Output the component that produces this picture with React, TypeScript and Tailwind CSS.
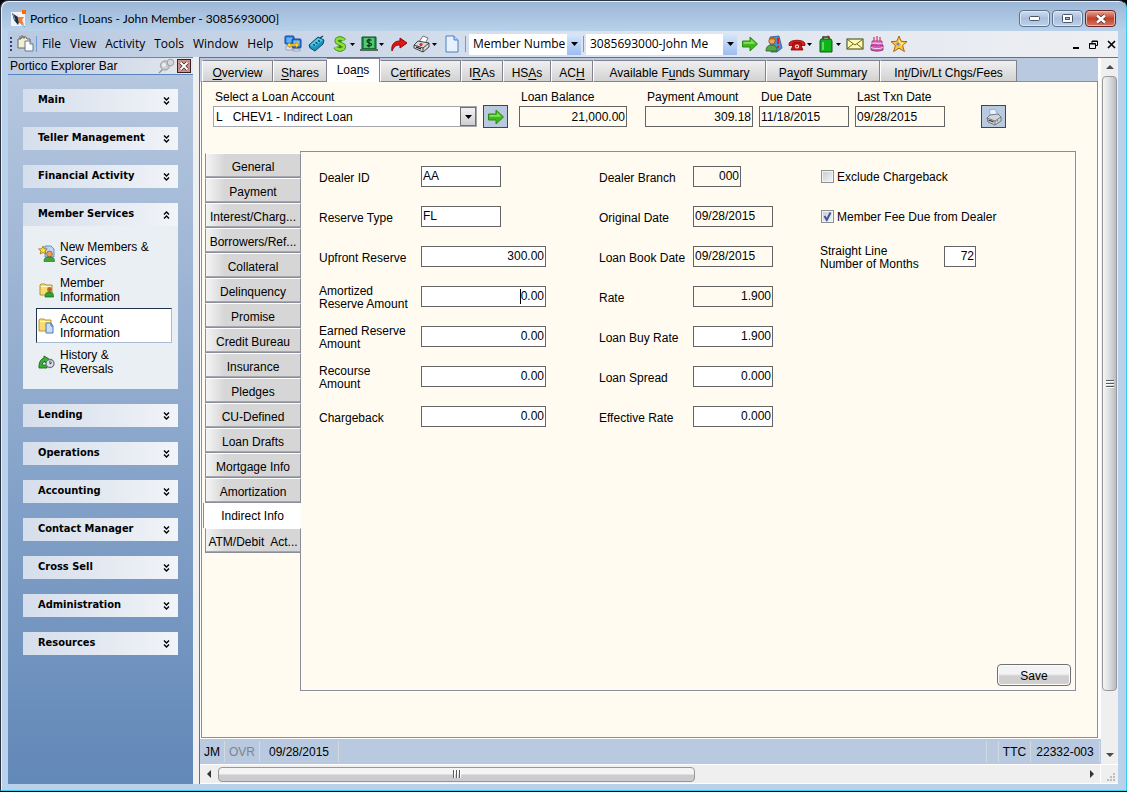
import React from "react";

type Kids = { children: React.ReactNode };

const Svg = ({ children }: Kids) => (
  <svg width="18" height="18" viewBox="0 0 18 18" aria-hidden="true" className="shrink-0">
    {children}
  </svg>
);

const Caret = () => (
  <svg width="5" height="3" viewBox="0 0 5 3" aria-hidden="true" className="shrink-0">
    <path d="M0 0h5L2.5 3z" fill="#000" />
  </svg>
);

const LogoIcon = () => (
  <Svg>
    <rect x="1" y="2" width="14" height="14" fill="#f4f4f4" />
    <path d="M2 3l6 4 1 5-1 3-4-5z" fill="#14304a" />
    <path d="M7 3l1 4 6 0-2 3 2 5-5-2-1-4z" fill="#f47b3a" />
    <path d="M3 4l2 6M11 14l4 3" stroke="#7aa0c4" />
    <rect x="12" y="0" width="4" height="4" fill="#ff6a00" />
  </Svg>
);

const DocsIcon = () => (
  <Svg>
    <path d="M1 4h3l1-2h4l1 2h3v9H1z" fill="#f2efd8" stroke="#6c6a55" />
    <path d="M3 1v3M5 0v3M7 1v3" stroke="#6c6a55" />
    <path d="M8 6h5l3 3v7H8z" fill="#fbfdff" stroke="#66788c" />
    <path d="M13 6v3h3" fill="#cddcf0" stroke="#66788c" />
  </Svg>
);

const ComputersIcon = () => (
  <Svg>
    <rect x="1" y="1" width="9" height="8" rx="1" fill="#2d78d8" stroke="#16489a" />
    <rect x="2.500" y="2.500" width="6" height="5" fill="#5fb4ff" />
    <rect x="8" y="4" width="9" height="9" rx="1" fill="#2d6fd0" stroke="#16489a" />
    <rect x="9.500" y="5.500" width="6" height="5.500" fill="#7cc4ff" />
    <path d="M2 11h6v4H2zM9 14h7v2H9z" fill="#e0e4ea" stroke="#7a8595" strokeWidth=".6" />
    <path d="M3 10l3-3v2h6V7l3 3-3 3v-2H6v2z" fill="#ffd52e" stroke="#b27e00" strokeWidth=".6" />
  </Svg>
);

const TagIcon = () => (
  <Svg>
    <path d="M1 10L10 2l6 3-1 4-8 7-5-3z" fill="#1b93bd" stroke="#0b4a68" />
    <path d="M2 10l8-7 5 2-9 7z" fill="#55cbe8" />
    <path d="M5 9.500l2 1M7.500 7.500l2 1M10 5.500l2 1" stroke="#0b4a68" strokeWidth="1.400" />
    <path d="M12 3l3-2" stroke="#0b4a68" strokeWidth="1.500" />
  </Svg>
);

const DollarIcon = () => (
  <Svg>
    <path d="M13 5.500C12 3 5.500 2.500 5.500 6S13 8 13 11.800 5.500 15 4.500 12" fill="none" stroke="#3a8a10" strokeWidth="4" />
    <path d="M9 1v16" stroke="#3a8a10" strokeWidth="3" />
    <path d="M13 5.500C12 3 5.500 2.500 5.500 6S13 8 13 11.800 5.500 15 4.500 12" fill="none" stroke="#8be03c" strokeWidth="2.400" />
    <path d="M9 1.500v2M9 14v2.500" stroke="#8be03c" strokeWidth="1.500" />
  </Svg>
);

const CashIcon = () => (
  <Svg>
    <path d="M2 2h14v12H2z" fill="#1c9a48" stroke="#064d1c" />
    <rect x="4" y="3" width="10" height="10" fill="#5cc478" />
    <path d="M11.500 5.500C10.500 4 7 4.500 7 6.300s4.500 1.200 4.500 3-3.500 2.400-4.500.8M9 3.500v9" fill="none" stroke="#053f17" strokeWidth="1.300" />
    <path d="M0 14h18v2H0z" fill="#5a6a5c" />
  </Svg>
);

const RedArrowIcon = () => (
  <Svg>
    <path d="M2 16C1 10 4 6 10 6V3l7 5-7 5v-3c-4 0-6 1-8 6z" fill="#e01616" stroke="#8d0606" />
  </Svg>
);

const PrinterIcon = ({ paper = "#fff" }: { paper?: string }) => (
  <Svg>
    <path d="M6 9L4 2l6-1 3 6z" fill={paper} stroke="#7fa6d6" strokeWidth=".8" />
    <path d="M2 10l3-3 8-1 3 3v4l-6 4-7-3z" fill="#d4d6da" stroke="#6b6e74" strokeWidth=".9" />
    <path d="M2 10l8 3 6-4M10 13v4" fill="none" stroke="#6b6e74" strokeWidth=".9" />
    <path d="M3.500 12l5 2" stroke="#333" strokeWidth="1.300" />
    <circle cx="12.500" cy="12.800" r=".9" fill="#4bb83a" />
  </Svg>
);

const RedPrinterIcon = () => (
  <Svg>
    <path d="M6 7l4-6 5 2-3 6z" fill="#fff" stroke="#555" strokeWidth=".8" />
    <path d="M1 10l4-4 11 2v4l-6 5-9-4z" fill="#d8d8d8" stroke="#333" strokeWidth=".9" />
    <path d="M1 10l9 3 6-5M10 13v4" fill="none" stroke="#333" strokeWidth=".9" />
    <circle cx="8" cy="9.500" r="1.600" fill="#e02424" />
    <path d="M3 12l5 2" stroke="#111" strokeWidth="1.300" />
  </Svg>
);

const PageIcon = () => (
  <Svg>
    <path d="M3 1h8l4 4v12H3z" fill="#e8f2ff" stroke="#4a7ec2" />
    <path d="M11 1v4h4" fill="#bcd6f6" stroke="#4a7ec2" />
  </Svg>
);

const GreenArrowIcon = () => (
  <Svg>
    <path d="M1.500 6H9V2l7.500 7L9 16v-4H1.500z" fill="#3fb81c" stroke="#2c8a14" />
    <path d="M2.500 7H10V4.500l4.500 4.200H2.500z" fill="#86e25a" />
  </Svg>
);

const PeopleIcon = () => (
  <Svg>
    <path d="M5 2l9-1 3 12-5 4H6z" fill="#4b8fd2" stroke="#28588e" strokeWidth=".8" />
    <circle cx="7" cy="6" r="3.200" fill="#f0a35c" stroke="#8a4716" strokeWidth=".8" />
    <path d="M4 5c0-4 6-4 6 0-2-1-4-1-6 0z" fill="#b8621b" />
    <path d="M1 16c0-5 3-6 6-6s5 2 5 6z" fill="#57a646" stroke="#28621c" strokeWidth=".8" />
    <path d="M13 3v6" stroke="#d82020" strokeWidth="2" />
    <circle cx="13" cy="12" r="1.200" fill="#d82020" />
  </Svg>
);

const PhoneIcon = () => (
  <Svg>
    <path d="M1 9c0-5 16-5 16 0v1.500h-4V8H5v2.500H1z" fill="#e21a1a" stroke="#7c0606" strokeWidth=".8" />
    <path d="M6 8h6l3 7H3z" fill="#cf1414" stroke="#7c0606" strokeWidth=".8" />
    <circle cx="9" cy="11.500" r="1.900" fill="#fff" />
    <circle cx="9" cy="11.500" r=".9" fill="#7c0606" />
  </Svg>
);

const BagIcon = () => (
  <Svg>
    <path d="M6 5V2h6v3" fill="none" stroke="#2a3a2a" strokeWidth="1.500" />
    <path d="M4 4h10l1 2v11H3V6z" fill="#12b21c" stroke="#0b5c10" />
    <path d="M5 7h2v8H5z" fill="#58dc5c" />
    <circle cx="11" cy="1.500" r="1" fill="#e32020" />
  </Svg>
);

const MailIcon = () => (
  <Svg>
    <rect x="1" y="4" width="16" height="10" fill="#fffbb0" stroke="#3e3c10" />
    <path d="M1.500 4.500L9 10l7.500-5.500M1.500 13.500L7 9M16.500 13.500L11 9" fill="none" stroke="#6b6820" />
  </Svg>
);

const CakeIcon = () => (
  <Svg>
    <path d="M6 2v4M9 1v5M12 2v4" stroke="#e03a6a" strokeWidth="1.300" />
    <path d="M4 6h10v5H4z" fill="#e878c8" stroke="#97307e" strokeWidth=".8" />
    <path d="M3 10h12v5c-3 1.500-9 1.500-12 0z" fill="#d45ab6" stroke="#7c2470" strokeWidth=".8" />
    <path d="M4 8c2 1.500 3-1 5 .5s3-1 5 .5M3 12.500c3 1.500 9 1.500 12 0" fill="none" stroke="#ffd3f0" />
  </Svg>
);

const StarIcon = () => (
  <Svg>
    <path d="M9 1l2.200 5.300 5.800.3-4.400 3.800 1.800 6.100L9 13.200l-5.400 3.300 1.800-6.100L1 6.600l5.800-.3z" fill="#ffc23c" stroke="#a86a12" />
    <path d="M9 5l1.200 3 3 .5-2.500 2" fill="none" stroke="#fff6c0" />
    <circle cx="8" cy="9" r="1.600" fill="#5a92d4" />
  </Svg>
);

const NewMemberIcon = () => (
  <Svg>
    <path d="M7 1h6l3 3v8H7z" fill="#bcd6fa" stroke="#4f79b4" strokeWidth=".8" />
    <circle cx="11.500" cy="9" r="2.900" fill="#ef9c50" stroke="#8a4716" strokeWidth=".6" />
    <path d="M6 16.500c0-4 2-4.500 5.500-4.500s5 1 5 4.500z" fill="#3fa63a" stroke="#20621c" strokeWidth=".6" />
    <path d="M5 1l1.300 2.800 3 .2L7 6l.8 3L5 7.400 2.200 9 3 6 .6 4l3-.2z" fill="#ffe034" stroke="#9b6c10" strokeWidth=".8" />
  </Svg>
);

const FolderPersonIcon = () => (
  <Svg>
    <path d="M2 4l1-1h4l1 1h6v10H2z" fill="#f7dc74" stroke="#b28b22" strokeWidth=".9" />
    <path d="M3 5.500h10" stroke="#fff7cf" />
    <circle cx="11.500" cy="8.500" r="2.400" fill="#b56a2a" />
    <path d="M7 16c0-4 2-5 4.500-5s4 1 4 5z" fill="#2fa32c" stroke="#17601a" strokeWidth=".7" />
  </Svg>
);

const FolderPageIcon = () => (
  <Svg>
    <path d="M1 3l1-1h4l1 1h6v11H1z" fill="#f7dc74" stroke="#b28b22" strokeWidth=".9" />
    <path d="M2 4.500h10" stroke="#fff7cf" />
    <path d="M8 6h5l2 3v7H8z" fill="#c9def8" stroke="#4d79b5" />
    <path d="M13 6v3h2" fill="none" stroke="#4d79b5" />
  </Svg>
);

const HistoryIcon = () => (
  <Svg>
    <path d="M1 13c0-4 2-7 5-8V3l5 3-4 4v-2c-2 1-3 3-3 4h5v3H1z" fill="#3cb234" stroke="#17681a" strokeWidth=".9" />
    <circle cx="12" cy="10.500" r="4" fill="#d9e0e8" stroke="#6c7683" strokeWidth="1.300" />
    <path d="M12 8v3l2-1.500" fill="none" stroke="#3b4552" />
  </Svg>
);

const PinIcon = () => (
  <Svg>
    <path d="M6 11L1 16" stroke="#8e9298" strokeWidth="1.200" />
    <circle cx="7" cy="8.500" r="4.600" fill="#c9ccd0" stroke="#9a9ea4" />
    <path d="M8 7l4-4 3 3-4 5z" fill="#b8bbc0" />
    <circle cx="12.500" cy="5.500" r="3.300" fill="#d6d8db" stroke="#9a9ea4" />
    <circle cx="6" cy="8" r="2" fill="#eceef0" />
  </Svg>
);

const Chevrons = ({ up = false }: { up?: boolean }) => (
  <svg width="7" height="8" viewBox="0 0 7 8" aria-hidden="true">
    {up ? (
      <path d="M1 3.500L3.500 1 6 3.500M1 7.500L3.500 5 6 7.500" fill="none" stroke="#000" strokeWidth="1.400" />
    ) : (
      <path d="M1 .5L3.500 3 6 .5M1 4.500L3.500 7 6 4.500" fill="none" stroke="#000" strokeWidth="1.400" />
    )}
  </svg>
);

const ToolButton = ({ label, narrow, children }: Kids & { label: string; narrow?: boolean }) => (
  <button aria-label={label} className={`flex h-6 shrink-0 items-center justify-center ${narrow ? "w-[22px]" : "w-6"}`}>
    {children}
  </button>
);

const DropButton = ({ label, children }: Kids & { label: string }) => (
  <button aria-label={label} className="flex h-6 w-[29px] shrink-0 items-center gap-px pl-0.5">
    {children}
    <Caret />
  </button>
);

const Separator = () => <div className="mx-px h-4 w-px shrink-0 bg-[#6f9cd6]" />;

const ToolCombo = ({ label, value, width }: { label: string; value: string; width: string }) => (
  <div className={`relative mx-px flex h-[21px] shrink-0 bg-white ${width}`}>
    <select aria-label={label} className="w-full appearance-none pl-1 text-xs outline-none">
      <option>{value}</option>
    </select>
    <div className="pointer-events-none absolute inset-y-0 right-0 flex w-[14px] items-center justify-center bg-linear-to-b from-[#d6e6fb] to-[#9dbdf0]">
      <svg width="7" height="4" viewBox="0 0 7 4" aria-hidden="true">
        <path d="M0 0h7L3.500 4z" />
      </svg>
    </div>
  </div>
);

const TitleBar = () => (
  <header className="flex h-[30px] shrink-0 items-start justify-between pr-0.5">
    <div className="flex items-center gap-0.5 pt-[9px] pl-0.5">
      <LogoIcon />
      <h1 className="font-['Lato','Open_Sans',sans-serif] text-xs leading-4">Portico - [Loans - John Member - 3085693000]</h1>
    </div>
    <div className="flex gap-0.5 pt-[9px]">
      <button aria-label="Minimize" className="flex h-[17px] w-[31px] items-center justify-center rounded-sm border border-[#5b728f] bg-linear-to-b from-[#cfdded] via-[#a9c0dc] to-[#bcd2ea] shadow-[inset_0_0_0_1px_#dfeaf6]">
        <svg width="11" height="5" viewBox="0 0 11 5"><rect x=".5" y=".5" width="10" height="4" rx="1" fill="#fff" stroke="#4b5768" /></svg>
      </button>
      <button aria-label="Maximize" className="flex h-[17px] w-[31px] items-center justify-center rounded-sm border border-[#5b728f] bg-linear-to-b from-[#cfdded] via-[#a9c0dc] to-[#bcd2ea] shadow-[inset_0_0_0_1px_#dfeaf6]">
        <svg width="11" height="9" viewBox="0 0 11 9"><rect x=".5" y=".5" width="10" height="8" rx="1" fill="#fff" stroke="#4b5768" /><rect x="3.500" y="3.500" width="4" height="2" fill="#9db6d6" stroke="#4b5768" /></svg>
      </button>
      <button aria-label="Close" className="flex h-[17px] w-[31px] items-center justify-center rounded-sm border border-[#6b2222] bg-linear-to-b from-[#e3a595] via-[#c0402a] to-[#cf7763] shadow-[inset_0_0_0_1px_#ebb5a8]">
        <svg width="12" height="10" viewBox="0 0 12 10"><path d="M2 1.500l8 7M10 1.500l-8 7" stroke="#5a3030" strokeWidth="4" /><path d="M2 1.500l8 7M10 1.500l-8 7" stroke="#fff" strokeWidth="2.500" /></svg>
      </button>
    </div>
  </header>
);

const MenuBar = () => (
  <div className="flex h-[26px] shrink-0 items-center bg-linear-to-r from-[#b9c9e0] via-[#d9e2ee] to-[#eeeff2]">
    <div className="ml-0.5 flex w-[7px] flex-col gap-0.5">
      {[0, 1, 2, 3].map((n) => (
        <div key={n} className="size-0.5 bg-[#27418e]" />
      ))}
    </div>
    <DocsIcon />
    <Separator />
    <nav className="flex w-[243px] shrink-0 gap-[9px] pl-1 text-xs">
      {["File", "View", "Activity", "Tools", "Window", "Help"].map((m) => (
        <button key={m}>{m}</button>
      ))}
    </nav>
    <div className="flex items-center">
      <ToolButton label="Network"><ComputersIcon /></ToolButton>
      <ToolButton label="Calculator"><TagIcon /></ToolButton>
      <DropButton label="Payments"><DollarIcon /></DropButton>
      <DropButton label="Cash"><CashIcon /></DropButton>
      <ToolButton label="Forward"><RedArrowIcon /></ToolButton>
      <DropButton label="Print"><RedPrinterIcon /></DropButton>
      <ToolButton label="New page"><PageIcon /></ToolButton>
      <Separator />
      <div className="w-px" />
      <ToolCombo label="Search by" value="Member Numbe" width="w-[112px]" />
      <Separator />
      <ToolCombo label="Member" value="3085693000-John Me" width="w-[151px]" />
      <ToolButton label="Go"><GreenArrowIcon /></ToolButton>
      <ToolButton label="Members"><PeopleIcon /></ToolButton>
      <DropButton label="Phone"><PhoneIcon /></DropButton>
      <DropButton label="Clipboard"><BagIcon /></DropButton>
      <ToolButton label="Mail" narrow><MailIcon /></ToolButton>
      <ToolButton label="Birthday" narrow><CakeIcon /></ToolButton>
      <ToolButton label="Favorites" narrow><StarIcon /></ToolButton>
    </div>
    <div className="ml-auto flex items-center gap-[9px] pr-0.5">
      <button aria-label="Minimize document">
        <svg width="8" height="9" viewBox="0 0 8 9"><path d="M1 7h6v2H1z" /></svg>
      </button>
      <button aria-label="Restore document">
        <svg width="9" height="9" viewBox="0 0 9 9"><path d="M3 3V1h5.500v4.500H6.500M3 1.500h5.500M.5 3.500h6v5h-6zM.5 4h6" fill="none" stroke="#000" /></svg>
      </button>
      <button aria-label="Close document">
        <svg width="9" height="9" viewBox="0 0 9 9"><path d="M1 1l7 7M8 1L1 8" stroke="#000" strokeWidth="1.600" /></svg>
      </button>
    </div>
  </div>
);

const sideItems = [
  { label: "New Members & Services", icon: <NewMemberIcon /> },
  { label: "Member Information", icon: <FolderPersonIcon /> },
  { label: "Account Information", icon: <FolderPageIcon /> },
  { label: "History & Reversals", icon: <HistoryIcon /> },
];

const groups = [
  "Main", "Teller Management", "Financial Activity", "Member Services", "Lending", "Operations",
  "Accounting", "Contact Manager", "Cross Sell", "Administration", "Resources",
];

const Sidebar = () => (
  <aside className="flex w-[185px] shrink-0 flex-col bg-linear-to-b from-[#b8c9e0] to-[#6288b8] font-['Liberation_Sans',sans-serif]">
    <div className="flex h-[17px] items-center border-t border-[#7b8290] bg-linear-to-r from-[#bccbe1] to-[#e4e8ef] pl-0.5">
      <h2 className="grow text-xs leading-4">Portico Explorer Bar</h2>
      <button aria-label="Pin" className="mr-px"><PinIcon /></button>
      <button aria-label="Close explorer bar" className="mr-0.5 flex size-[14px] items-center justify-center border border-[#3a2020] bg-[#c9938c]">
        <svg width="10" height="10" viewBox="0 0 10 10"><path d="M1.500 1.500l7 7M8.500 1.500l-7 7" stroke="#4a2a2a" strokeWidth="3.600" /><path d="M1.500 1.500l7 7M8.500 1.500l-7 7" stroke="#fff" strokeWidth="2" /></svg>
      </button>
    </div>
    <div className="flex grow flex-col gap-[15px] border-t border-[#5b83bb] px-[15px] pt-[14px]">
      {groups.map((g) => (
        <section key={g}>
          <button className="flex h-[23px] w-full items-center justify-between bg-linear-to-r from-[#d5deeb] to-[#f1f4f8] pr-2 pl-[15px] font-['DejaVu_Sans_Condensed','Noto_Sans',sans-serif] text-[11px] font-bold">
            {g}
            <Chevrons up={g === "Member Services"} />
          </button>
          {g === "Member Services" && (
            <ul className="flex flex-col gap-px bg-[#eaeff4] py-[10px] pr-1.5 pl-[13px]">
              {sideItems.map((s, n) => (
                <li key={s.label}>
                  <a
                    href="#"
                    className={`flex h-[35px] items-center gap-1 border pl-px text-xs leading-[14px] ${n === 2 ? "border-t-[#22344e] border-r-[#a9bbd6] border-b-[#a9bbd6] border-l-[#22344e] bg-white" : "border-transparent"}`}
                  >
                    {s.icon}
                    <span className="w-[96px]">{s.label}</span>
                  </a>
                </li>
              ))}
            </ul>
          )}
        </section>
      ))}
    </div>
  </aside>
);

const mainTabs: [string, string, string, string][] = [
  ["", "O", "verview", "w-[71px]"],
  ["", "S", "hares", "w-[54px]"],
  ["Loa", "n", "s", "w-[53px]"],
  ["C", "e", "rtificates", "w-[81px]"],
  ["I", "R", "As", "w-[42px]"],
  ["HS", "A", "s", "w-[48px]"],
  ["AC", "H", "", "w-[42px]"],
  ["Available F", "u", "nds Summary", "w-[173px]"],
  ["Pa", "y", "off Summary", "w-[114px]"],
  ["In", "t", "/Div/Lt Chgs/Fees", "w-[137px]"],
];

const MainTabs = () => (
  <div role="tablist" className="z-10 -mb-px flex h-6 items-end pl-0.5">
    {mainTabs.map(([a, u, b, w], n) => {
      const on = n === 2;
      return (
        <button
          key={w + a}
          role="tab"
          aria-selected={on}
          className={`overflow-hidden whitespace-nowrap border-t border-r border-[#80828e] text-xs ${w} ${on ? "h-6 bg-white pb-0.5" : "h-[22px] border-b border-l border-l-white bg-linear-to-b from-[#f0f0f0] to-[#d2d2d2] pt-1"}`}
        >
          {a}
          <span className="underline underline-offset-2">{u}</span>
          {b}
        </button>
      );
    })}
  </div>
);

const sideTabs = [
  "General", "Payment", "Interest/Charg...", "Borrowers/Ref...", "Collateral", "Delinquency", "Promise", "Credit Bureau",
  "Insurance", "Pledges", "CU-Defined", "Loan Drafts", "Mortgage Info", "Amortization", "Indirect Info", "ATM/Debit  Act...",
];

const SideTabs = () => (
  <div role="tablist" aria-orientation="vertical" className="z-10 -mr-px flex w-[98px] shrink-0 flex-col items-end pt-0.5">
    {sideTabs.map((t) => {
      const on = t === "Indirect Info";
      return (
        <button
          key={t}
          role="tab"
          aria-selected={on}
          className={`h-[25px] overflow-hidden whitespace-pre border-l border-[#8b8d99] text-center text-xs ${on ? "w-[98px] bg-white" : "w-24 border-t border-r border-b border-t-white bg-linear-to-r from-[#f4f4f4] via-[#d6d6d6] via-20% to-[#d6d6d6] pt-0.5 shadow-[inset_0_-1px_#a4a6b0]"}`}
        >
          {t}
        </button>
      );
    })}
  </div>
);

const boxClass = "h-[21px] rounded-none border border-[#646464] px-px text-xs outline-none";

type FieldProps = { id: string; value: string; width: string; right?: boolean; locked?: boolean };

const Box = ({ id, value, width, right, locked }: FieldProps) => (
  <input
    id={id}
    defaultValue={value}
    readOnly={locked}
    className={`${boxClass} ${width} ${right ? "text-right" : ""} ${locked ? "bg-transparent" : "bg-white"}`}
  />
);

const LoanHeader = () => (
  <div className="flex items-end pl-[10px]">
    <div className="flex flex-col gap-px">
      <label htmlFor="loan" className="pl-0.5 text-xs leading-4">Select a Loan Account</label>
      <div className="relative flex">
        <select id="loan" className="h-[21px] w-[264px] appearance-none border border-[#a3a5ab] bg-white pl-0.5 text-xs whitespace-pre outline-none">
          <option>{"L\u00a0\u00a0\u00a0CHEV1 - Indirect Loan"}</option>
        </select>
        <div className="pointer-events-none absolute inset-y-px right-px flex w-4 items-center justify-center border border-[#707070] bg-linear-to-b from-[#f2f2f2] to-[#cfcfcf]">
          <svg width="7" height="4" viewBox="0 0 7 4" aria-hidden="true"><path d="M0 0h7L3.500 4z" /></svg>
        </div>
      </div>
    </div>
    <button aria-label="Load loan" className="-mb-px ml-1.5 flex h-[23px] w-[25px] items-center justify-center border border-[#2b4a72] bg-[#b9c9e0]">
      <GreenArrowIcon />
    </button>
    <div className="ml-[11px] flex flex-col gap-px">
      <label htmlFor="bal" className="pl-0.5 text-xs leading-4">Loan Balance</label>
      <Box id="bal" value="21,000.00" width="w-[108px]" right locked />
    </div>
    <div className="ml-[18px] flex flex-col gap-px">
      <label htmlFor="pay" className="pl-0.5 text-xs leading-4">Payment Amount</label>
      <Box id="pay" value="309.18" width="w-[108px]" right locked />
    </div>
    <div className="ml-1.5 flex flex-col gap-px">
      <label htmlFor="due" className="pl-0.5 text-xs leading-4">Due Date</label>
      <Box id="due" value="11/18/2015" width="w-[90px]" locked />
    </div>
    <div className="ml-1.5 flex flex-col gap-px">
      <label htmlFor="last" className="pl-0.5 text-xs leading-4">Last Txn Date</label>
      <Box id="last" value="09/28/2015" width="w-[90px]" locked />
    </div>
    <button aria-label="Print loan" className="-mb-px ml-9 flex h-[23px] w-[25px] items-center justify-center border border-[#2b4a72] bg-[#b9c9e0]">
      <PrinterIcon paper="#e6f1ff" />
    </button>
  </div>
);

type Row = FieldProps & { label: React.ReactNode; caret?: boolean };

const left: Row[] = [
  { id: "dealer", label: "Dealer ID", value: "AA", width: "w-20" },
  { id: "rtype", label: "Reserve Type", value: "FL", width: "w-20" },
  { id: "upfront", label: "Upfront Reserve", value: "300.00", width: "w-[125px]", right: true },
  { id: "amort", label: <>Amortized<br />Reserve Amount</>, value: "0.00", width: "w-[125px]", right: true, caret: true },
  { id: "earned", label: <>Earned Reserve<br />Amount</>, value: "0.00", width: "w-[125px]", right: true },
  { id: "recourse", label: <>Recourse<br />Amount</>, value: "0.00", width: "w-[125px]", right: true },
  { id: "charge", label: "Chargeback", value: "0.00", width: "w-[125px]", right: true },
];

const middle: Row[] = [
  { id: "branch", label: "Dealer Branch", value: "000", width: "w-12", right: true, locked: true },
  { id: "orig", label: "Original Date", value: "09/28/2015", width: "w-20", locked: true },
  { id: "book", label: "Loan Book Date", value: "09/28/2015", width: "w-20", locked: true },
  { id: "rate", label: "Rate", value: "1.900", width: "w-20", right: true, locked: true },
  { id: "buy", label: "Loan Buy Rate", value: "1.900", width: "w-20", right: true },
  { id: "spread", label: "Loan Spread", value: "0.000", width: "w-20", right: true },
  { id: "eff", label: "Effective Rate", value: "0.000", width: "w-20", right: true },
];

const Column = ({ rows, width, labelWidth }: { rows: Row[]; width: string; labelWidth: string }) => (
  <div className={`shrink-0 ${width}`}>
    {rows.map(({ label, caret, ...f }) => (
      <div key={f.id} className="flex h-10 items-center">
        <label htmlFor={f.id} className={`shrink-0 pt-1 text-xs leading-[13px] whitespace-nowrap ${labelWidth}`}>{label}</label>
        <div className="relative flex">
          <Box {...f} />
          {caret && <div className="absolute top-[3px] right-[25px] h-[15px] w-px bg-black" />}
        </div>
      </div>
    ))}
  </div>
);

const Check = ({ id, label, on }: { id: string; label: string; on?: boolean }) => (
  <div className="flex h-10 items-center gap-[3px] pl-px">
    <div className="relative flex size-[13px]">
      <input
        id={id}
        type="checkbox"
        defaultChecked={on}
        className="peer size-[13px] appearance-none border border-[#8e8f8f] bg-linear-to-br from-[#c6cad2] to-[#f6f6f6] shadow-[inset_0_0_0_1px_#f4f4f4]"
      />
      <svg viewBox="0 0 13 13" className="pointer-events-none absolute inset-0 hidden peer-checked:block">
        <path d="M3.500 6l2.300 4L9.500 2.500" fill="none" stroke="#3d55a0" strokeWidth="2" />
      </svg>
    </div>
    <label htmlFor={id} className="pt-0.5 text-xs leading-4">{label}</label>
  </div>
);

const FormPanel = () => (
  <form className="mr-[21px] flex grow flex-col border border-[#8b8d99] pt-1 pl-[18px] shadow-[1px_1px_#fff]" onSubmit={(e) => e.preventDefault()}>
    <div className="flex grow">
      <Column rows={left} width="w-[280px]" labelWidth="w-[102px]" />
      <Column rows={middle} width="w-[221px]" labelWidth="w-[94px]" />
      <div className="grow">
        <Check id="exclude" label="Exclude Chargeback" />
        <Check id="fee" label="Member Fee Due from Dealer" on />
        <div className="flex h-10 items-center">
          <label htmlFor="months" className="w-[124px] pt-1 text-xs leading-[13px]">
            Straight Line<br />Number of Months
          </label>
          <Box id="months" value="72" width="w-8" right />
        </div>
      </div>
    </div>
    <button className="mr-1 mb-1 h-[22px] w-[74px] self-end rounded-sm border border-[#707070] bg-linear-to-b from-[#f3f3f3] from-45% to-[#cfcfcf] to-55% pt-px text-xs shadow-[inset_0_0_0_1px_#fcfcfc]">
      Save
    </button>
  </form>
);

const StatusBar = () => (
  <footer className="flex h-[25px] shrink-0 items-center bg-[#b9c9e0] text-xs">
    <span className="w-6 pl-1">JM</span>
    <span className="flex h-[21px] w-[36px] items-center justify-center border-x border-[#d4d9e0] text-[#7d858f]">OVR</span>
    <span className="flex h-[21px] w-[79px] items-center justify-center border-r border-[#d4d9e0]">09/28/2015</span>
    <span className="ml-auto h-[21px] w-3 border-l border-[#d4d9e0]" />
    <span className="flex h-[21px] w-[33px] items-center justify-center border-x border-[#d4d9e0]">TTC</span>
    <span className="mr-px flex h-[21px] w-[69px] items-center justify-center border-r border-[#d4d9e0]">22332-003</span>
  </footer>
);

const VScroll = () => (
  <div className="flex w-[17px] shrink-0 flex-col items-center bg-[#efefef]">
    <div className="flex h-[18px] items-center">
      <svg width="8" height="4" viewBox="0 0 8 4"><path d="M0 4h8L4 0z" fill="#4a4a4a" /></svg>
    </div>
    <div className="flex w-[15px] basis-[615px] flex-col items-center justify-center gap-px rounded-sm border border-[#989898] bg-linear-to-r from-[#f6f6f6] via-[#dcdde0] to-[#b9babd]">
      {[0, 1, 2].map((n) => (
        <div key={n} className="h-0.5 w-2 border-b border-white bg-[#5a5a5a]" />
      ))}
    </div>
    <div className="flex grow items-end pb-[7px]">
      <svg width="8" height="4" viewBox="0 0 8 4"><path d="M0 0h8L4 4z" fill="#4a4a4a" /></svg>
    </div>
  </div>
);

const HScroll = () => (
  <div className="flex h-5 shrink-0 items-center border-y border-white bg-[#efefef]">
    <div className="flex w-[18px] justify-center">
      <svg width="4" height="8" viewBox="0 0 4 8"><path d="M4 0v8L0 4z" fill="#333" /></svg>
    </div>
    <div className="flex h-[15px] w-[52%] items-center justify-center gap-px rounded-sm border border-[#989898] bg-linear-to-b from-[#f4f4f4] from-45% to-[#cbcccf] to-55%">
      {[0, 1, 2].map((n) => (
        <div key={n} className="h-2 w-0.5 border-r border-white bg-[#5a5a5a]" />
      ))}
    </div>
    <div className="ml-auto flex pr-1.5">
      <svg width="4" height="8" viewBox="0 0 4 8"><path d="M0 0v8l4-4z" fill="#333" /></svg>
    </div>
    <div className="flex h-full w-[18px] items-end justify-end border-l border-white pr-[3px] pb-0.5">
      <svg width="8" height="8" viewBox="0 0 8 8"><path d="M6 0h2v2H6zM3 3h2v2H3zM6 3h2v2H6zM0 6h2v2H0zM3 6h2v2H3zM6 6h2v2H6z" fill="#bdbdbd" /></svg>
    </div>
  </div>
);

export default function App() {
  return (
    <div className="flex min-h-screen bg-black">
      <div className="mb-px flex grow flex-col rounded-t-lg border border-t-[#2b3440] border-r-[#35d0ea] border-b-[#35d0ea] border-l-[#2b3440] bg-linear-to-b from-[#9bb6d6] to-[#b9d1ea] to-[30px] pr-2 pb-1.5 pl-[7px] font-['Open_Sans','Noto_Sans',sans-serif] text-black shadow-[inset_1px_1px_#e6f0fa]">
        <TitleBar />
        <MenuBar />
        <div className="flex grow">
          <Sidebar />
          <div className="w-1.5 shrink-0 bg-[#f0f0f0]" />
          <main className="flex min-w-0 grow flex-col border-t border-l border-[#6e7076] bg-white font-['Liberation_Sans',Arial,sans-serif]">
            <div className="flex grow">
              <div className="flex min-w-0 grow flex-col">
                <div className="mr-[3px] flex grow flex-col bg-linear-to-b from-[#b9c9e0] from-[24px] to-white to-[24px]">
                  <MainTabs />
                  <div className="mb-px ml-px flex grow flex-col border border-[#8b8d99] bg-[#fffbf0] pt-[7px] pb-[46px] pl-px">
                    <LoanHeader />
                    <div className="mt-6 flex grow">
                      <SideTabs />
                      <FormPanel />
                    </div>
                  </div>
                </div>
                <StatusBar />
              </div>
              <VScroll />
            </div>
            <HScroll />
          </main>
        </div>
      </div>
    </div>
  );
}
